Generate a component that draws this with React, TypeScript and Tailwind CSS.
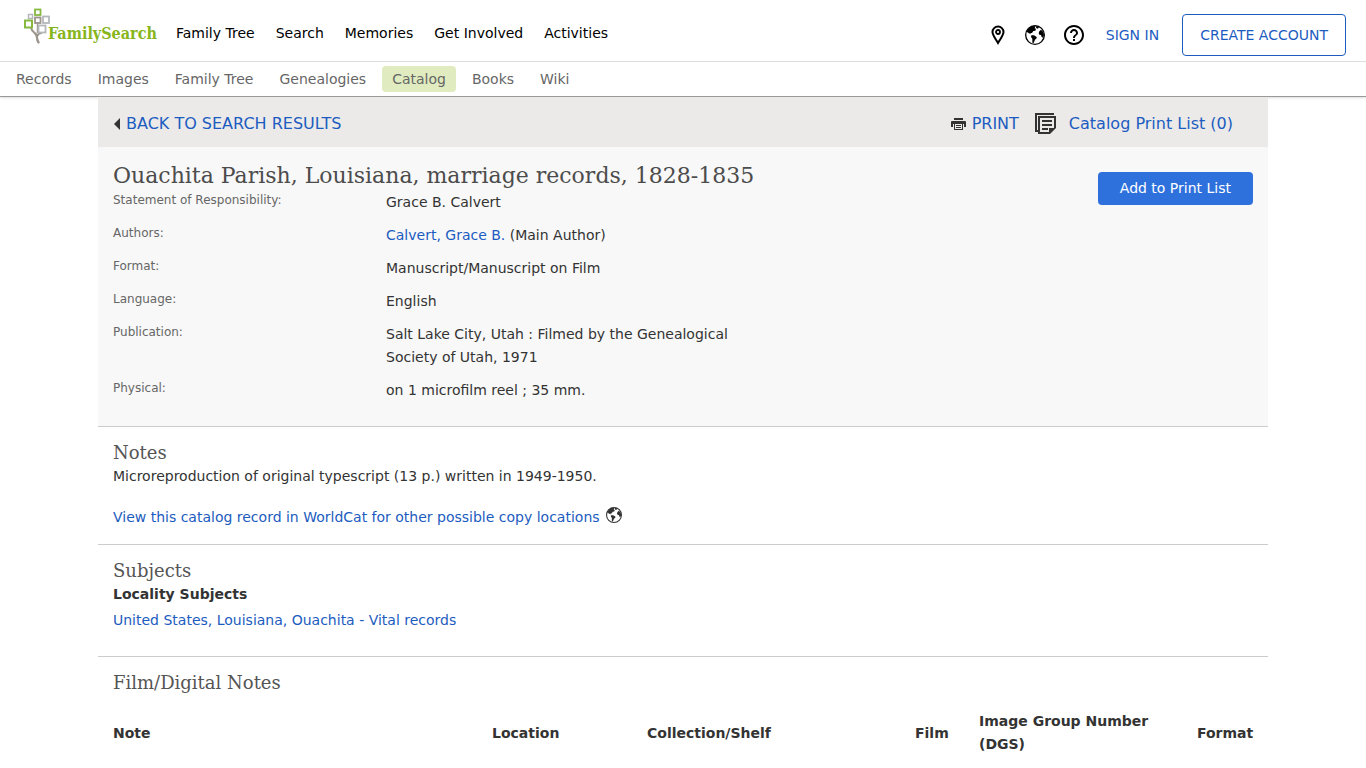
import type { ReactNode } from 'react'
import { MdHelpOutline } from 'react-icons/md'

const MAIN_NAV = ['Family Tree', 'Search', 'Memories', 'Get Involved', 'Activities']

const SUB_NAV = ['Records', 'Images', 'Family Tree', 'Genealogies', 'Catalog', 'Books', 'Wiki']

const DETAILS: { label: string; value: ReactNode }[] = [
  { label: 'Statement of Responsibility:', value: 'Grace B. Calvert' },
  {
    label: 'Authors:',
    value: (
      <>
        <a href="#author" className="text-[#1c5cc0]">Calvert, Grace B.</a> (Main Author)
      </>
    ),
  },
  { label: 'Format:', value: 'Manuscript/Manuscript on Film' },
  { label: 'Language:', value: 'English' },
  { label: 'Publication:', value: 'Salt Lake City, Utah : Filmed by the Genealogical Society of Utah, 1971' },
  { label: 'Physical:', value: 'on 1 microfilm reel ; 35 mm.' },
]

function Logo() {
  return (
    <svg viewBox="0 0 134 38" className="h-[38px] w-[134px]" role="img" aria-label="FamilySearch">
      <g fill="none" stroke="#9c968c">
        <path d="M13.500 15v10" strokeWidth="1.500" />
        <path d="M7 20c1 4 4 4 6 8" strokeWidth="2" />
        <path d="M18 25c-3 0-5 2-5 5 0 2 1 4 2 5" strokeWidth="2" />
        <path d="M11 25c3 3 1 7 4 10" strokeWidth="2" />
      </g>
      <g fill="#fff" strokeWidth="1.800">
        <rect x="11" y="1.500" width="5.500" height="5.500" stroke="#87b940" />
        <rect x="4.500" y="6.500" width="4" height="4" stroke="#b5b8bb" strokeWidth="1.500" />
        <rect x="11" y="9.500" width="5.500" height="5.500" stroke="#9c968c" />
        <rect x="19" y="8.500" width="6" height="6.500" stroke="#b5b8bb" />
        <rect x="1" y="12.500" width="7" height="7" stroke="#87b940" strokeWidth="2" />
        <rect x="14.500" y="17.500" width="7" height="7" stroke="#b5b8bb" />
      </g>
      <text x="24" y="31" fill="#87b51c" className="font-['DejaVu_Serif_Condensed','DejaVu_Serif',serif] text-[16px] font-bold">
        FamilySearch
      </text>
    </svg>
  )
}

function PinIcon() {
  return (
    <svg viewBox="0 0 14 20" className="h-5 w-3.5" fill="none" stroke="currentColor">
      <path d="M7 18C4 13 1.500 10 1.500 7a5.500 5.500 0 0 1 11 0c0 3-2.500 6-5.500 11z" strokeWidth="2" />
      <circle cx="7" cy="7" r="2" strokeWidth="1.800" />
    </svg>
  )
}

function GlobeIcon({ className }: { className: string }) {
  return (
    <svg viewBox="0 0 60 60" className={className} fill="currentColor">
      <circle cx="30" cy="30" r="28" fill="none" stroke="currentColor" strokeWidth="4" />
      <path d="M4 20C8 12 15 5 24 3l8 1-3 5 4 3-2 5-6 1-4 6-5 0 2 4-6-3-5-3z" />
      <path d="M34 3l7 2 0 4-4 2-4-3z" />
      <path d="M19 31l8 0 8 5 0 4-5 4-4 10-4-1 0-12-4-5z" />
      <path d="M43 19l5-5 7 7 2 9-3 8-4-2-2-6-5-1-2-5z" />
    </svg>
  )
}

function PrinterIcon() {
  return (
    <svg viewBox="0 0 15 14" className="h-3.5 w-[15px]" fill="#333">
      <path d="M3 1h9v2H3z" />
      <path d="M1 4h13a1 1 0 0 1 1 1v5h-2V7H2v3H0V5a1 1 0 0 1 1-1z" />
      <path d="M3 7h1v5h7V7h1v6H3z" />
      <path d="M5 8h5v1H5zM5 10h5v1H5z" />
    </svg>
  )
}

function PrintListIcon() {
  return (
    <svg viewBox="0 0 22 22" className="h-[22px] w-[22px]" fill="none" stroke="#333" strokeWidth="2">
      <path d="M18 2V1H1v17h3" />
      <path d="M20 15V4H4v16h11" />
      <path d="M7 8h10M7 12h10M7 16h6" />
      <path d="M14 15h7l-6 6h-1z" fill="#333" stroke="none" />
    </svg>
  )
}

function Section({ title, children }: { title: string; children: ReactNode }) {
  return (
    <section className="border-t border-[#ccc] px-[15px] pt-3.5">
      <h2 className="font-['DejaVu_Serif',serif] text-lg leading-6 font-light text-[#555]">{title}</h2>
      {children}
    </section>
  )
}

function Header() {
  return (
    <header className="border-b border-[#999] bg-white shadow-sm">
      <div className="flex h-[62px] items-start justify-between border-b border-[#ddd] pr-5 pl-6">
        <div className="flex items-start">
          <a href="#home" className="mt-2 mr-[18px]">
            <Logo />
          </a>
          <nav className="mt-[21px] flex gap-[21px] text-sm leading-6 text-black">
            {MAIN_NAV.map((item) => (
              <a key={item} href="#nav" className="whitespace-nowrap">{item}</a>
            ))}
          </nav>
        </div>
        <div className="mt-3.5 flex items-center text-sm text-[#1c5cc0]">
          <button aria-label="Locations" className="mr-5 text-black"><PinIcon /></button>
          <button aria-label="Language" className="mr-[17px] text-black"><GlobeIcon className="h-5 w-5" /></button>
          <button aria-label="Help" className="mr-5 text-black"><MdHelpOutline size={24} /></button>
          <a href="#signin" className="mr-[23px] whitespace-nowrap">SIGN IN</a>
          <a href="#create" className="rounded border border-[#1c5cc0] px-[17px] py-[9px] leading-[22px] whitespace-nowrap">
            CREATE ACCOUNT
          </a>
        </div>
      </div>
      <nav className="flex h-[34px] items-center gap-1.5 px-1.5 text-sm text-[#666]">
        {SUB_NAV.map((item) => (
          <a
            key={item}
            href="#sub"
            className={`rounded px-2.5 leading-[26px] whitespace-nowrap ${item === 'Catalog' ? 'bg-[#e0ecc0]' : ''}`}
          >
            {item}
          </a>
        ))}
      </nav>
    </header>
  )
}

export default function App() {
  return (
    <div className="min-h-screen bg-white font-['DejaVu_Sans',sans-serif] text-[#333]">
      <Header />

      <main className="mx-auto max-w-[1170px]">
        {/* Toolbar */}
        <div className="flex h-[50px] items-center justify-between bg-[#ebeae9] pt-[3px] pr-[35px] pl-[15px] text-base text-[#1c5cc0]">
          <a href="#results" className="flex items-center gap-1.5">
            <svg viewBox="0 0 7 12" className="h-3 w-[7px]" fill="#333">
              <path d="M7 0v12L1 6z" />
            </svg>
            BACK TO SEARCH RESULTS
          </a>
          <div className="flex items-center gap-4">
            <button className="flex items-center gap-1.5"><PrinterIcon />PRINT</button>
            <a href="#list" className="flex items-center gap-3"><PrintListIcon />Catalog Print List (0)</a>
          </div>
        </div>

        {/* Record summary */}
        <section className="flex items-start justify-between bg-[#f8f8f8] px-[15px] pt-[15px] pb-6">
          <div>
            <h1 className="font-['DejaVu_Serif',serif] text-[22px] leading-7 text-[#4c4c4c]">
              Ouachita Parish, Louisiana, marriage records, 1828-1835
            </h1>
            <dl className="mt-px flex flex-col gap-2.5">
              {DETAILS.map((row) => (
                <div key={row.label} className="flex items-start">
                  <dt className="w-[273px] shrink-0 text-xs leading-[18px] text-[#666]">{row.label}</dt>
                  <dd className="w-[360px] text-sm leading-[23px]">{row.value}</dd>
                </div>
              ))}
            </dl>
          </div>
          <button className="mt-2.5 rounded bg-[#2e71dc] px-[22px] text-sm leading-[33px] whitespace-nowrap text-white">
            Add to Print List
          </button>
        </section>

        <Section title="Notes">
          <p className="text-sm leading-[22px]">Microreproduction of original typescript (13 p.) written in 1949-1950.</p>
          <p className="mt-[19px] mb-4 flex items-center gap-1.5 text-sm leading-[22px]">
            <a href="#worldcat" className="text-[#1c5cc0]">
              View this catalog record in WorldCat for other possible copy locations
            </a>
            <GlobeIcon className="mb-1 h-4 w-4" />
          </p>
        </Section>

        <Section title="Subjects">
          <h3 className="text-sm leading-[22px] font-bold">Locality Subjects</h3>
          <p className="mt-1 mb-[25px] text-sm leading-[22px]">
            <a href="#subject" className="text-[#1c5cc0]">United States, Louisiana, Ouachita - Vital records</a>
          </p>
        </Section>

        <Section title="Film/Digital Notes">
          <table className="mt-[15px] w-full table-fixed text-left text-sm leading-[23px]">
            <thead>
              <tr>
                <th className="w-[379px]">Note</th>
                <th className="w-[155px]">Location</th>
                <th className="w-[268px]">Collection/Shelf</th>
                <th className="w-16">Film</th>
                <th>
                  <span className="block max-w-[190px]">Image Group Number (DGS)</span>
                </th>
                <th className="w-14">Format</th>
              </tr>
            </thead>
          </table>
        </Section>
      </main>
    </div>
  )
}
